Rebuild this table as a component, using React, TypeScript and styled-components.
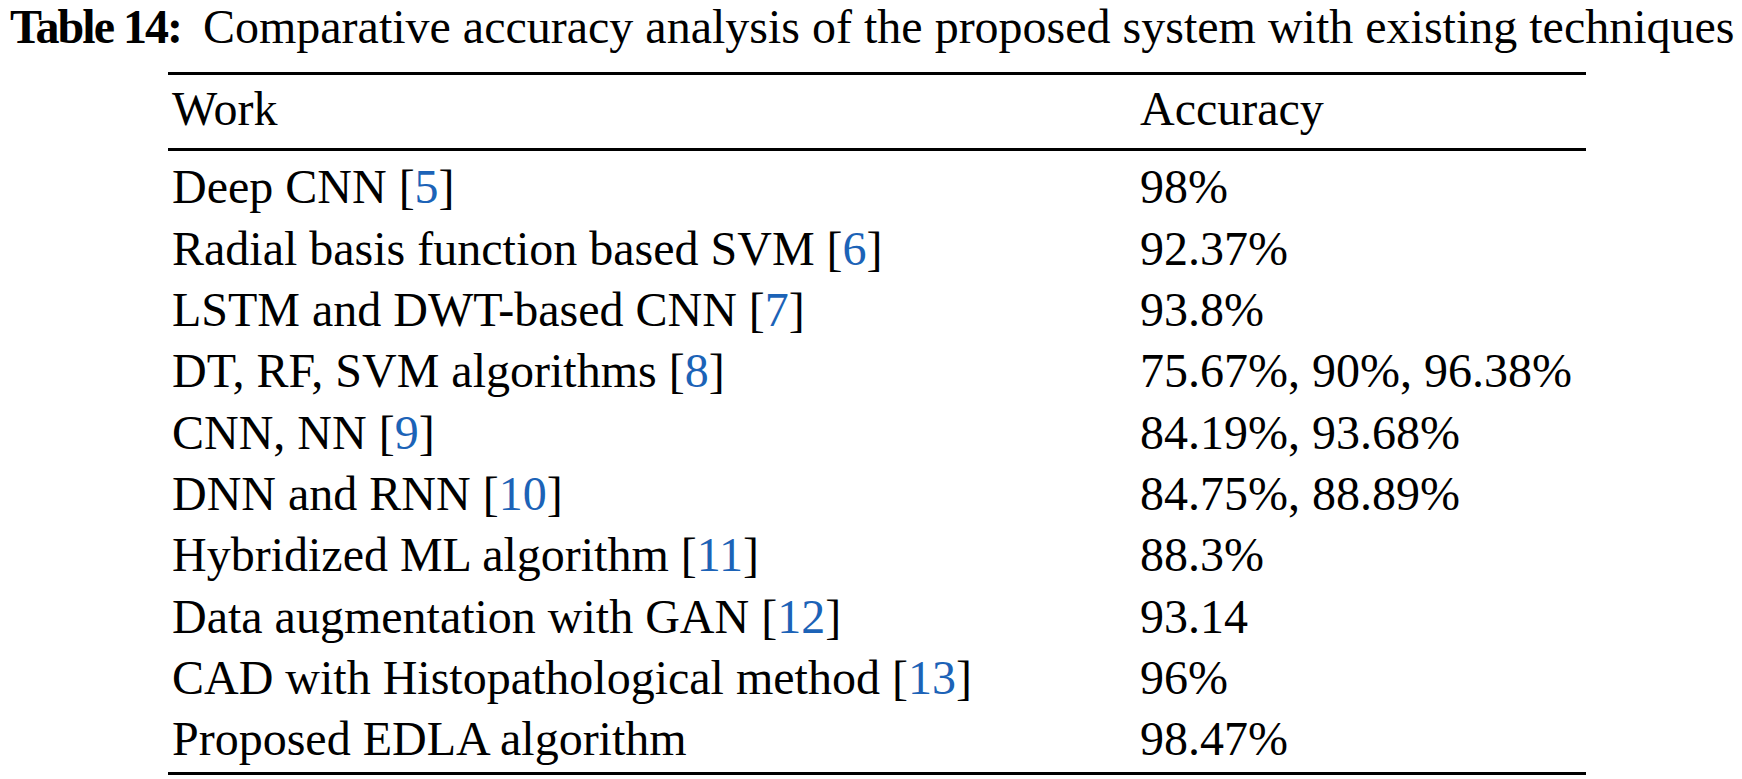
import React from "react";
import styled, { createGlobalStyle } from "styled-components";

const GlobalStyle = createGlobalStyle`
  html, body {
    margin: 0;
    padding: 0;
    background: #ffffff;
  }
  body {
    font-family: "Liberation Serif", "Times New Roman", serif;
    color: #000000;
  }
`;

const Page = styled.main`
  width: 1742px;
  min-height: 779px;
  background: #ffffff;
`;

const Caption = styled.div`
  padding-left: 10px;
  font-size: 48px;
  line-height: 54px;
  white-space: nowrap;
`;

const CaptionLabel = styled.b`
  font-weight: 700;
  letter-spacing: -2px;
  margin-right: 22px;
`;

const Table = styled.div`
  margin: 18px 0 0 168px;
  width: 1418px;
  font-size: 48px;
`;

const Head = styled.div`
  border-top: 3px solid #000;
  border-bottom: 3px solid #000;
  padding: 3px 0 9px;
`;

const Body = styled.div`
  border-bottom: 3px solid #000;
  padding: 5px 0 2px;
`;

const Row = styled.div`
  display: grid;
  grid-template-columns: 968px 1fr;
  height: 61.33px;
  line-height: 61.33px;
  white-space: nowrap;
`;

const Cell = styled.div`
  padding-left: 4px;
`;

const Ref = styled.span`
  color: #1c63b7;
`;

type Entry = { work: string; ref?: string; accuracy: string };

const rows: Entry[] = [
  { work: "Deep CNN", ref: "5", accuracy: "98%" },
  { work: "Radial basis function based SVM", ref: "6", accuracy: "92.37%" },
  { work: "LSTM and DWT-based CNN", ref: "7", accuracy: "93.8%" },
  { work: "DT, RF, SVM algorithms", ref: "8", accuracy: "75.67%, 90%, 96.38%" },
  { work: "CNN, NN", ref: "9", accuracy: "84.19%, 93.68%" },
  { work: "DNN and RNN", ref: "10", accuracy: "84.75%, 88.89%" },
  { work: "Hybridized ML algorithm", ref: "11", accuracy: "88.3%" },
  { work: "Data augmentation with GAN", ref: "12", accuracy: "93.14" },
  { work: "CAD with Histopathological method", ref: "13", accuracy: "96%" },
  { work: "Proposed EDLA algorithm", accuracy: "98.47%" },
];

const App: React.FC = () => {
  return (
    <Page>
      <GlobalStyle />
      <Caption>
        <CaptionLabel>Table 14:</CaptionLabel>
        Comparative accuracy analysis of the proposed system with existing techniques
      </Caption>
      <Table>
        <Head>
          <Row>
            <Cell>Work</Cell>
            <Cell>Accuracy</Cell>
          </Row>
        </Head>
        <Body>
          {rows.map((r) => (
            <Row key={r.work}>
              <Cell>
                {r.work}
                {r.ref && (
                  <>
                    {" "}[<Ref>{r.ref}</Ref>]
                  </>
                )}
              </Cell>
              <Cell>{r.accuracy}</Cell>
            </Row>
          ))}
        </Body>
      </Table>
    </Page>
  );
};

export default App;
